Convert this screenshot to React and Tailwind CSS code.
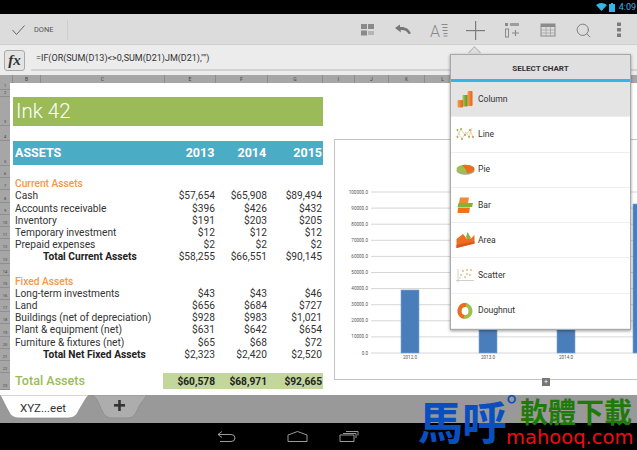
import React from 'react';
import { Search } from 'lucide-react';

const columns = [
  { label: 'A', width: 'w-[3px]' },
  { label: 'B', width: 'w-[28px]' },
  { label: 'C', width: 'w-[124px]' },
  { label: 'E', width: 'w-[51px]' },
  { label: 'F', width: 'w-[52px]' },
  { label: 'G', width: 'w-[55px]' },
  { label: 'I', width: 'w-[32px]' },
  { label: 'J', width: 'w-[34px]' },
  { label: 'K', width: 'w-[36px]' },
  { label: 'L', width: 'w-[36px]' },
];

const currentAssets = [
  ['Cash', '$57,654', '$65,908', '$89,494'],
  ['Accounts receivable', '$396', '$426', '$432'],
  ['Inventory', '$191', '$203', '$205'],
  ['Temporary investment', '$12', '$12', '$12'],
  ['Prepaid expenses', '$2', '$2', '$2'],
];

const fixedAssets = [
  ['Long-term investments', '$43', '$43', '$46'],
  ['Land', '$656', '$684', '$727'],
  ['Buildings (net of depreciation)', '$928', '$983', '$1,021'],
  ['Plant & equipment (net)', '$631', '$642', '$654'],
  ['Furniture & fixtures (net)', '$65', '$68', '$72'],
];

const Row = ({ n, className = 'h-[12.2px]', children }) => (
  <div className={`flex ${className}`}>
    <div className="w-[10px] shrink-0 bg-[#a6a6a6] border-b border-[#8f8f8f] flex items-end justify-center text-[4px] leading-[6px] text-[#444]">
      {n}
    </div>
    <div className="flex-1 flex pl-[3px] min-w-0">{children}</div>
  </div>
);

const Cells = ({ label, values, labelClass = 'pl-[2px]', valueClass = '' }) => (
  <>
    <div className={`w-[152px] shrink-0 whitespace-nowrap leading-[12px] ${labelClass}`}>{label}</div>
    {values.map((v, i) => (
      <div
        key={i}
        className={`shrink-0 text-right leading-[12px] whitespace-nowrap pr-[1px] ${i === 2 ? 'w-[55px]' : i === 1 ? 'w-[52px]' : 'w-[51px]'} ${valueClass}`}
      >
        {v}
      </div>
    ))}
  </>
);

const ColumnIcon = () => (
  <svg width="16" height="18" viewBox="0 0 16 18">
    <defs>
      <linearGradient id="colO" x1="0" x2="1" y1="0" y2="0">
        <stop offset="0" stopColor="#f7a04d" />
        <stop offset="1" stopColor="#e9601a" />
      </linearGradient>
      <linearGradient id="colG" x1="0" x2="1" y1="0" y2="0">
        <stop offset="0" stopColor="#a9c95a" />
        <stop offset="1" stopColor="#5f8f22" />
      </linearGradient>
    </defs>
    <rect x="10.5" y="1" width="5" height="15" rx="1" fill="url(#colO)" />
    <rect x="5.5" y="5" width="5" height="11.5" fill="url(#colG)" />
    <rect x="0.5" y="10" width="5.5" height="7.5" rx="1" fill="url(#colO)" />
  </svg>
);

const LineIcon = () => (
  <svg width="18" height="15" viewBox="0 0 18 15" fill="none">
    <polyline points="1,10 5,2 9,8 14,3 17,10" stroke="#f4b48e" strokeWidth="0.7" />
    <polyline points="1,3 6,12 10,5 13,10 16,1" stroke="#c2d89a" strokeWidth="0.7" />
    <circle cx="1.5" cy="10" r="0.9" fill="#ee7b33" />
    <circle cx="9" cy="8" r="0.9" fill="#ee7b33" />
    <circle cx="17" cy="10" r="0.9" fill="#ee7b33" />
    <circle cx="6" cy="12" r="0.9" fill="#8bb23e" />
    <circle cx="1.5" cy="3" r="0.9" fill="#8bb23e" />
    <circle cx="13" cy="10" r="0.9" fill="#8bb23e" />
    <circle cx="14" cy="3" r="0.9" fill="#ee7b33" />
    <circle cx="5" cy="2" r="0.9" fill="#8bb23e" />
  </svg>
);

const PieIcon = () => (
  <svg width="19" height="11" viewBox="0 0 19 11">
    <ellipse cx="9.5" cy="6.5" rx="9" ry="4.3" fill="#a8a898" />
    <ellipse cx="9.5" cy="5" rx="9" ry="4.2" fill="#9cc04c" />
    <path d="M6 1.2 A9 4.2 0 0 1 18.5 5 A9 4.2 0 0 1 11 9.2 L9.5 5 Z" fill="#ee6c21" />
  </svg>
);

const BarIcon = () => (
  <svg width="16" height="17" viewBox="0 0 16 17">
    <path d="M3 0.5 H12 L11 6 H2 Z" fill="#ef8a2e" />
    <path d="M1.5 6 H16 L15 10 H0.5 Z" fill="#87b035" />
    <path d="M1 10.5 H13 L12 16 H0.5 Z" fill="#ee7220" />
  </svg>
);

const AreaIcon = () => (
  <svg width="19" height="17" viewBox="0 0 19 17">
    <path d="M10 5 L11.5 0 L15 6 L12 8 Z" fill="#8ab237" />
    <path d="M0.5 7 L7 2 L11 7 L15 6.5 L18.5 3 L18.5 11.5 L0.5 16 Z" fill="#ee6d20" />
    <path d="M0.5 13 L18.5 9.5 L18.5 11.5 L0.5 16 Z" fill="#d8591a" />
  </svg>
);

const ScatterIcon = () => (
  <svg width="18" height="15" viewBox="0 0 18 15" fill="none">
    <path d="M2 1 V14.5 M0 12.5 H18" stroke="#c4c4c4" strokeWidth="0.8" />
    <circle cx="5" cy="7" r="0.8" fill="#8bb23e" />
    <circle cx="7" cy="3" r="0.8" fill="#ee7b33" />
    <circle cx="9" cy="9" r="0.8" fill="#8bb23e" />
    <circle cx="11" cy="2" r="0.8" fill="#ee7b33" />
    <circle cx="11" cy="6" r="0.8" fill="#8bb23e" />
    <circle cx="14" cy="7" r="0.8" fill="#ee7b33" />
    <circle cx="15" cy="2" r="0.8" fill="#ee7b33" />
    <circle cx="4" cy="10" r="0.8" fill="#c8c8c8" />
  </svg>
);

const DoughnutIcon = () => (
  <svg width="16" height="18" viewBox="0 0 16 18" fill="none">
    <ellipse cx="8" cy="9" rx="5.5" ry="6" stroke="#9cc04c" strokeWidth="4" />
    <path d="M9 3 A5.5 6 0 0 0 7 14.9" stroke="#ee6c21" strokeWidth="4" />
  </svg>
);

const charts = [
  { name: 'Column', icon: ColumnIcon, active: true },
  { name: 'Line', icon: LineIcon },
  { name: 'Pie', icon: PieIcon },
  { name: 'Bar', icon: BarIcon },
  { name: 'Area', icon: AreaIcon },
  { name: 'Scatter', icon: ScatterIcon },
  { name: 'Doughnut', icon: DoughnutIcon },
];

const ToolIcon = ({ children }) => (
  <svg width="18" height="18" viewBox="0 0 18 18" fill="#8a8a8a">{children}</svg>
);

const ChartBox = () => {
  const ticks = [0, 1, 2, 3, 4, 5, 6, 7, 8, 9, 10];
  const bars = [
    { x: 66, top: 150, label: '2012.0' },
    { x: 144, top: 100, label: '2013.0' },
    { x: 222, top: 100, label: '2014.0' },
    { x: 298, top: 64, label: '2015.0' },
  ];
  return (
    <div className="absolute left-[334px] top-[139px] w-[307px] h-[241px] bg-white border border-[#c4c4c4]">
      <svg width="305" height="239" className="block">
        {ticks.map(t => {
          const y = 213 - t * 16.1;
          return (
            <g key={t}>
              <line x1="36" x2="305" y1={y} y2={y} stroke="#d6d6d6" strokeWidth="1" />
              <text x="33" y={y + 1.5} textAnchor="end" fontSize="4.6" fill="#555" fontFamily="Roboto, sans-serif">
                {t === 0 ? '0.0' : `${t * 10000}.0`}
              </text>
            </g>
          );
        })}
        {bars.map(b => (
          <g key={b.label}>
            <rect x={b.x} y={b.top} width="18" height={213 - b.top} fill="#4a7ebb" stroke="#7aa3d6" strokeWidth="0.6" />
            {b.x < 290 && (
              <text x={b.x + 9} y="219" textAnchor="middle" fontSize="4.6" fill="#555" fontFamily="Roboto, sans-serif">
                {b.label}
              </text>
            )}
          </g>
        ))}
      </svg>
    </div>
  );
};

export default function App() {
  return (
    <div className="relative w-[637px] h-[450px] overflow-hidden bg-white font-['Roboto',sans-serif] text-[10.2px] text-[#333]">
      {/* status bar */}
      <div className="h-[14px] bg-black flex items-center justify-end gap-[2px] pr-[1px] text-[#33b5e5] text-[9px]">
        <svg width="11" height="8" viewBox="0 0 11 8" fill="#33b5e5"><path d="M0 2 Q5.5 -2 11 2 L5.5 8 Z" /></svg>
        <svg width="6" height="9" viewBox="0 0 6 9" fill="#33b5e5"><path d="M2 0 H4 V1 H6 V9 H0 V1 H2 Z" /></svg>
        <span className="ml-[2px] leading-none">4:09</span>
      </div>

      {/* action bar */}
      <div className="h-[31px] bg-[#dcdcdc] border-b border-[#cfcfcf] flex items-center pt-[2px]">
        <div className="w-[68px] h-[20px] border-r border-[#cecece] flex items-center pl-[12px] gap-[9px]">
          <svg width="13" height="10" viewBox="0 0 13 10" fill="none" stroke="#666" strokeWidth="1"><path d="M0.5 5 L4.5 9.5 L12.5 0.5" /></svg>
          <span className="text-[7.4px] text-[#555]">DONE</span>
        </div>
        <div className="flex-1 flex items-center justify-end pr-[9px] gap-[18px]">
          <ToolIcon>
            <rect x="3" y="3" width="6" height="5" /><rect x="10" y="3" width="6" height="5" />
            <rect x="3" y="9.5" width="6" height="5" /><rect x="10" y="10" width="6" height="4" fill="#b5b5b5" />
          </ToolIcon>
          <svg width="18" height="18" viewBox="0 0 18 18" fill="#777"><path d="M1 7 L6 3.5 L6 6 C11 5.5 15 7.5 17 12.5 L14.5 13 C13 10 10 8.7 6.5 9.2 L7 11.5 Z" /></svg>
          <ToolIcon>
            <text x="0" y="15.5" fontSize="16" fontFamily="Roboto, sans-serif" fontWeight="300">A</text>
            <rect x="11.5" y="3" width="6" height="1" /><rect x="12.5" y="6" width="5" height="1" />
            <rect x="12.5" y="9" width="5" height="1" /><rect x="13.5" y="12" width="4" height="1" />
            <rect x="13.5" y="14.5" width="4" height="1" />
          </ToolIcon>
          <svg width="19" height="19" viewBox="0 0 19 19" fill="#7c7c7c"><rect x="0" y="9" width="19" height="1.2" /><rect x="9" y="0" width="1.2" height="19" /></svg>
          <ToolIcon>
            <rect x="2" y="2" width="3" height="3" /><rect x="7" y="2" width="9" height="3" fill="#9d9d9d" />
            <rect x="2.5" y="8" width="3" height="8" fill="none" stroke="#8a8a8a" />
            <path d="M9 12 H16 M12.5 9 V15" stroke="#8a8a8a" strokeWidth="1.2" />
          </ToolIcon>
          <ToolIcon>
            <rect x="2" y="3" width="14" height="12" fill="none" stroke="#8a8a8a" />
            <rect x="2" y="3" width="14" height="3" />
            <path d="M2 9 H16 M2 12 H16 M7 6 V15 M11.5 6 V15" stroke="#a3a3a3" strokeWidth="0.8" />
          </ToolIcon>
          <Search size={17} strokeWidth={1.3} color="#777" />
          <svg width="18" height="18" viewBox="0 0 18 18" fill="#7c7c7c"><rect x="7" y="1.5" width="4" height="3.5" /><rect x="7" y="7" width="4" height="3.5" /><rect x="7" y="12.5" width="4" height="3.5" /></svg>
        </div>
      </div>

      {/* formula bar */}
      <div className="h-[30px] bg-[#ececec] flex items-center">
        <div className="ml-[4px] w-[21px] h-[21px] rounded-[3px] border border-[#a9a9a9] bg-[#e4e4e4] flex items-center justify-center font-['Liberation_Serif',serif] italic font-bold text-[15px] text-[#333] leading-none">
          fx
        </div>
        <div className="ml-[6px] flex-1 h-[21px] border-b-2 border-[#d2d2d2] pl-[5px] flex items-center text-[9px] text-[#333]">
          =IF(OR(SUM(D13)&lt;&gt;0,SUM(D21)JM(D21),"")
        </div>
      </div>

      {/* column headers */}
      <div className="h-[8px] bg-[#a6a6a6] flex pl-[10px] text-[5px] leading-[8px] text-[#444]">
        {columns.map(c => (
          <div key={c.label} className={`${c.width} shrink-0 text-center border-r border-[#8c8c8c]`}>{c.label === 'A' ? '' : c.label}</div>
        ))}
      </div>

      {/* sheet */}
      <div className="h-[312px] overflow-hidden">
        <Row n="1" className="h-[7px]" />
        <Row n="2" className="h-[7px]" />
        <Row n="3" className="h-[29px]">
          <div className="w-[310px] h-[29px] bg-[#9bbb59] text-white text-[20.5px] font-light leading-[28px] pl-[3px]">Ink 42</div>
        </Row>
        <Row n="4" className="h-[15px]" />
        <Row n="5" className="h-[25px]">
          <div className="w-[310px] h-[24px] bg-[#4bacc6] text-white text-[12.5px] font-bold flex items-center pr-[1px] leading-none">
            <div className="w-[152px] pl-[2px]">ASSETS</div>
            <div className="w-[51px] text-right pr-[1px]">2013</div>
            <div className="w-[52px] text-right pr-[1px]">2014</div>
            <div className="w-[55px] text-right">2015</div>
          </div>
        </Row>
        <Row n="6" />
        <Row n="7"><div className="pl-[2px] leading-[12px] font-medium text-[#f79646]">Current Assets</div></Row>
        {currentAssets.map((r, i) => (
          <Row key={r[0]} n={8 + i}><Cells label={r[0]} values={r.slice(1)} /></Row>
        ))}
        <Row n="13"><Cells label="Total Current Assets" labelClass="pl-[30px] font-bold text-[#222]" values={['$58,255', '$66,551', '$90,145']} /></Row>
        <Row n="14" />
        <Row n="15"><div className="pl-[2px] leading-[12px] font-medium text-[#f79646]">Fixed Assets</div></Row>
        {fixedAssets.map((r, i) => (
          <Row key={r[0]} n={16 + i}><Cells label={r[0]} values={r.slice(1)} /></Row>
        ))}
        <Row n="21"><Cells label="Total Net Fixed Assets" labelClass="pl-[30px] font-bold text-[#222]" values={['$2,323', '$2,420', '$2,520']} /></Row>
        <Row n="22" />
        <Row n="23" className="h-[17px]">
          <div className="w-[150px] pl-[2px] text-[12.6px] font-medium text-[#9bbb59] leading-[16px]">Total Assets</div>
          <div className="w-[160px] h-[16px] bg-[#c3d69b] flex items-center font-bold text-[#222]">
            <div className="w-[53px] text-right pr-[1px]">$60,578</div>
            <div className="w-[52px] text-right pr-[1px]">$68,971</div>
            <div className="w-[55px] text-right pr-[1px]">$92,665</div>
          </div>
        </Row>
      </div>

      {/* sheet tabs */}
      <div className="relative h-[28px] bg-[#999999]">
        <svg width="150" height="28" viewBox="0 0 150 28" className="absolute left-0 top-0">
          <path d="M90 0 C95 0 97 4 100 11 C103 18 105 23 112 23 H128 C134 23 136 18 139 11 L147 0 Z" fill="#adadad" stroke="#8a8a8a" strokeWidth="0.7" />
          <path d="M0 0 C3 5 6 12 9 17 C11 21 14 23 20 23 H68 C74 23 77 20 79 15 L85 5 C87 1 89 0 90 0 Z" fill="#ffffff" stroke="#8a8a8a" strokeWidth="0.7" />
        </svg>
        <span className="absolute left-[20px] top-[5px] text-[11.5px] leading-[16px] text-[#333]">XYZ...eet</span>
        <svg width="11" height="11" viewBox="0 0 11 11" fill="#333" className="absolute left-[114px] top-[5px]"><rect x="0" y="4" width="11" height="2.6" /><rect x="4.2" y="0" width="2.6" height="11" /></svg>
      </div>

      {/* nav bar */}
      <div className="h-[27px] bg-black flex items-center pl-[217px]">
        <svg width="19" height="11" viewBox="0 0 19 11" fill="none" stroke="#9a9a9a" strokeWidth="1"><path d="M5 0.5 L1 3.5 L5 6.5 M1 3.5 H14 Q18 3.5 18 7 Q18 10.5 14 10.5 H3" /></svg>
        <svg width="21" height="11" viewBox="0 0 21 11" fill="none" stroke="#9a9a9a" strokeWidth="1" className="ml-[51px]"><path d="M1 4 L10.5 0.5 L20 4 V10.5 H1 Z" /></svg>
        <svg width="20" height="11" viewBox="0 0 20 11" fill="none" stroke="#9a9a9a" strokeWidth="1" className="ml-[31px]"><path d="M1 4 H15 V10.5 H1 Z M4 2.5 H17 V7 M7 0.5 H19 V4.5" /></svg>
      </div>

      <ChartBox />

      {/* chart resize handle */}
      <div className="absolute left-[542px] top-[378px] w-[8px] h-[8px] bg-[#777] flex items-center justify-center text-[7px] leading-none text-white">+</div>

      {/* select chart popup */}
      <div className="absolute left-[470px] top-[48px] w-[9px] h-[9px] rotate-45 bg-[#e0e0e0] border-l border-t border-[#b5b5b5]" />
      <div className="absolute left-[450px] top-[54px] w-[181px] bg-white border border-[#a9a9a9] shadow-[0_1px_3px_rgba(0,0,0,0.4)]">
        <div className="h-[24px] bg-[#e0e0e0] flex items-center justify-center pt-[3px] text-[8px] font-bold text-[#333]">SELECT CHART</div>
        <div className="h-[3px] bg-[#33b5e5]" />
        {charts.map(c => (
          <div key={c.name} className={`h-[35.3px] flex items-center border-b border-[#eeeeee] ${c.active ? 'bg-[#e4e4e4]' : 'bg-white'}`}>
            <div className="w-[26px] flex justify-center pl-[2px]"><c.icon /></div>
            <span className="text-[8.6px] ml-[1px] text-[#333]">{c.name}</span>
          </div>
        ))}
      </div>

      {/* watermark */}
      <div className="absolute left-[418px] top-[393px] flex font-['Noto_Sans_CJK_TC',sans-serif]">
        <div className="w-[88px] text-[45px] leading-[56px] font-bold text-[#0a4fc0] whitespace-nowrap tracking-[-1px]">馬呼</div>
        <div className="flex flex-col w-[131px]">
          <div className="flex h-[34px] items-start">
            <div className="w-[14px] h-[20px] text-[30px] leading-[24px] text-[#0a4fc0]">°</div>
            <div className="mt-[2px] text-[28px] leading-[32px] font-bold text-[#1f7a08] whitespace-nowrap">軟體下載</div>
          </div>
          <div className="font-['DejaVu_Sans',sans-serif] text-[19.5px] leading-[22px] text-[#f00c14] whitespace-nowrap">mahooq.com</div>
        </div>
      </div>
    </div>
  );
}
